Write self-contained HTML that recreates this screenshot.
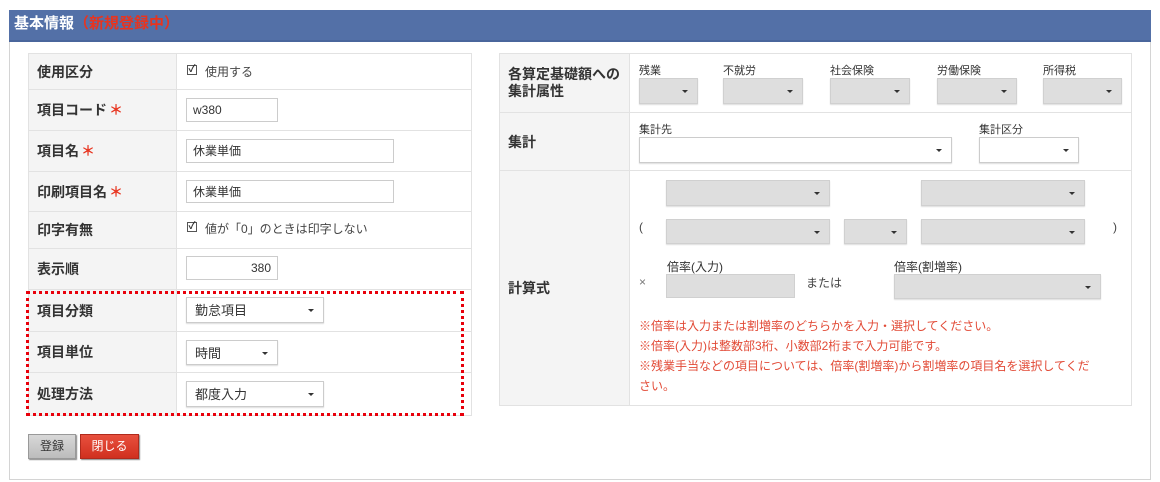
<!DOCTYPE html>
<html><head><meta charset="utf-8"><style>
*{box-sizing:border-box;margin:0;padding:0}
body{width:1160px;height:482px;background:#fff;font-family:"Liberation Sans","Noto Sans CJK JP",sans-serif;position:relative;overflow:hidden;color:#333}
.a{position:absolute}
.box{left:9px;top:10px;width:1142px;height:470px;border:1px solid #d4d4d4}
.hdr{left:9px;top:10px;width:1142px;height:32px;background:#5370a7;border-bottom:2px solid #4a669c;color:#fff;font-weight:bold;font-size:15px;line-height:28px;padding-left:5px}
.hdr span{color:#e8341f}
.cell{position:absolute;border:1px solid #e2e2e2}
.lab{background:#f4f4f4;font-weight:bold;font-size:14px;color:#333;display:flex;align-items:center;padding-left:8px}
.star{color:#e8341f;margin-left:2px}
.inp{position:absolute;background:#fff;border:1px solid #ccc;font-size:12px;line-height:23px;padding-left:6px;color:#333}
.sel{position:absolute;background:#fff;border:1px solid #ccc;box-shadow:0 1px 1px #ddd;font-size:13px;line-height:25px;padding-left:8px}
.sel::after{content:"";position:absolute;right:9px;top:50%;margin-top:-1px;border-left:3px solid transparent;border-right:3px solid transparent;border-top:3px solid #333}
.g{background:#dedede;border-color:#d0d0d0}
.t{position:absolute;font-size:11px;color:#333}
.txt{position:absolute;font-size:12px;color:#444}
.cb{position:absolute;width:10px;height:10px;border:1px solid #555;font-size:10px;font-weight:bold;line-height:8px;text-align:center}
.red{position:absolute;color:#e24a36;font-size:12px;left:639px}
</style></head><body>
<div class="a box"></div>
<div class="a hdr">基本情報<span>（新規登録中）</span></div>

<div class="cell lab" style="left:28px;top:53px;width:149px;height:37px">使用区分</div>
<div class="cell" style="left:176px;top:53px;width:296px;height:37px"></div>
<div class="cell lab" style="left:28px;top:89px;width:149px;height:42px">項目コード<span class="star">＊</span></div>
<div class="cell" style="left:176px;top:89px;width:296px;height:42px"></div>
<div class="cell lab" style="left:28px;top:130px;width:149px;height:42px">項目名<span class="star">＊</span></div>
<div class="cell" style="left:176px;top:130px;width:296px;height:42px"></div>
<div class="cell lab" style="left:28px;top:171px;width:149px;height:41px">印刷項目名<span class="star">＊</span></div>
<div class="cell" style="left:176px;top:171px;width:296px;height:41px"></div>
<div class="cell lab" style="left:28px;top:211px;width:149px;height:38px">印字有無</div>
<div class="cell" style="left:176px;top:211px;width:296px;height:38px"></div>
<div class="cell lab" style="left:28px;top:248px;width:149px;height:42px">表示順</div>
<div class="cell" style="left:176px;top:248px;width:296px;height:42px"></div>
<div class="cell lab" style="left:28px;top:289px;width:149px;height:43px">項目分類</div>
<div class="cell" style="left:176px;top:289px;width:296px;height:43px"></div>
<div class="cell lab" style="left:28px;top:331px;width:149px;height:42px">項目単位</div>
<div class="cell" style="left:176px;top:331px;width:296px;height:42px"></div>
<div class="cell lab" style="left:28px;top:372px;width:149px;height:44px">処理方法</div>
<div class="cell" style="left:176px;top:372px;width:296px;height:44px"></div>

<div class="cb" style="left:187px;top:65px">✓</div><div class="txt" style="left:205px;top:63px">使用する</div>
<div class="inp" style="left:186px;top:98px;width:92px;height:24px">w380</div>
<div class="inp" style="left:186px;top:139px;width:208px;height:24px">休業単価</div>
<div class="inp" style="left:186px;top:180px;width:208px;height:23px">休業単価</div>
<div class="cb" style="left:187px;top:222px">✓</div><div class="txt" style="left:205px;top:220px">値が「0」のときは印字しない</div>
<div class="inp" style="left:186px;top:256px;width:92px;height:24px;text-align:right;padding-right:6px">380</div>
<div class="sel" style="left:186px;top:297px;width:138px;height:26px">勤怠項目</div>
<div class="sel" style="left:186px;top:340px;width:92px;height:25px">時間</div>
<div class="sel" style="left:186px;top:381px;width:138px;height:26px">都度入力</div>
<div class="a" style="left:26px;top:291px;width:438px;height:125px;border:3px dotted #e8000b"></div>

<div class="a" style="left:28px;top:434px;width:48px;height:25px;background:linear-gradient(#d8d8d8,#bcbcbc);border:1px solid #999;box-shadow:1px 1px 1px #888;font-size:12px;line-height:23px;text-align:center;color:#333">登録</div>
<div class="a" style="left:80px;top:434px;width:59px;height:25px;background:linear-gradient(#e8503e,#d0301f);border:1px solid #b02a1c;box-shadow:1px 1px 1px #888;font-size:12px;line-height:23px;text-align:center;color:#fff">閉じる</div>

<div class="cell lab" style="left:499px;top:53px;width:131px;height:60px;line-height:17px">各算定基礎額への<br>集計属性</div>
<div class="cell" style="left:629px;top:53px;width:503px;height:60px"></div>
<div class="cell lab" style="left:499px;top:112px;width:131px;height:59px">集計</div>
<div class="cell" style="left:629px;top:112px;width:503px;height:59px"></div>
<div class="cell lab" style="left:499px;top:170px;width:131px;height:236px">計算式</div>
<div class="cell" style="left:629px;top:170px;width:503px;height:236px"></div>

<div class="t" style="left:639px;top:62px">残業</div>
<div class="t" style="left:723px;top:62px">不就労</div>
<div class="t" style="left:830px;top:62px">社会保険</div>
<div class="t" style="left:937px;top:62px">労働保険</div>
<div class="t" style="left:1043px;top:62px">所得税</div>
<div class="sel g" style="left:639px;top:78px;width:59px;height:26px"></div>
<div class="sel g" style="left:723px;top:78px;width:80px;height:26px"></div>
<div class="sel g" style="left:830px;top:78px;width:80px;height:26px"></div>
<div class="sel g" style="left:937px;top:78px;width:80px;height:26px"></div>
<div class="sel g" style="left:1043px;top:78px;width:79px;height:26px"></div>

<div class="t" style="left:639px;top:121px">集計先</div>
<div class="t" style="left:979px;top:121px">集計区分</div>
<div class="sel" style="left:639px;top:137px;width:313px;height:26px"></div>
<div class="sel" style="left:979px;top:137px;width:100px;height:26px"></div>

<div class="sel g" style="left:666px;top:180px;width:164px;height:26px"></div>
<div class="sel g" style="left:921px;top:180px;width:164px;height:26px"></div>
<div class="txt" style="left:639px;top:220px">(</div>
<div class="txt" style="left:1113px;top:220px">)</div>
<div class="sel g" style="left:666px;top:219px;width:164px;height:25px"></div>
<div class="sel g" style="left:844px;top:219px;width:63px;height:25px"></div>
<div class="sel g" style="left:921px;top:219px;width:164px;height:25px"></div>
<div class="t" style="left:667px;top:258px;font-size:12px">倍率(入力)</div>
<div class="t" style="left:894px;top:258px;font-size:12px">倍率(割増率)</div>
<div class="txt" style="left:639px;top:275px;color:#777">×</div>
<div class="a" style="left:666px;top:274px;width:129px;height:24px;background:#dedede;border:1px solid #d0d0d0"></div>
<div class="txt" style="left:806px;top:274px">または</div>
<div class="sel g" style="left:894px;top:274px;width:207px;height:25px"></div>
<div class="red" style="top:317px">※倍率は入力または割増率のどちらかを入力・選択してください。</div>
<div class="red" style="top:337px">※倍率(入力)は整数部3桁、小数部2桁まで入力可能です。</div>
<div class="red" style="top:357px">※残業手当などの項目については、倍率(割増率)から割増率の項目名を選択してくだ</div>
<div class="red" style="top:377px">さい。</div>
</body></html>
